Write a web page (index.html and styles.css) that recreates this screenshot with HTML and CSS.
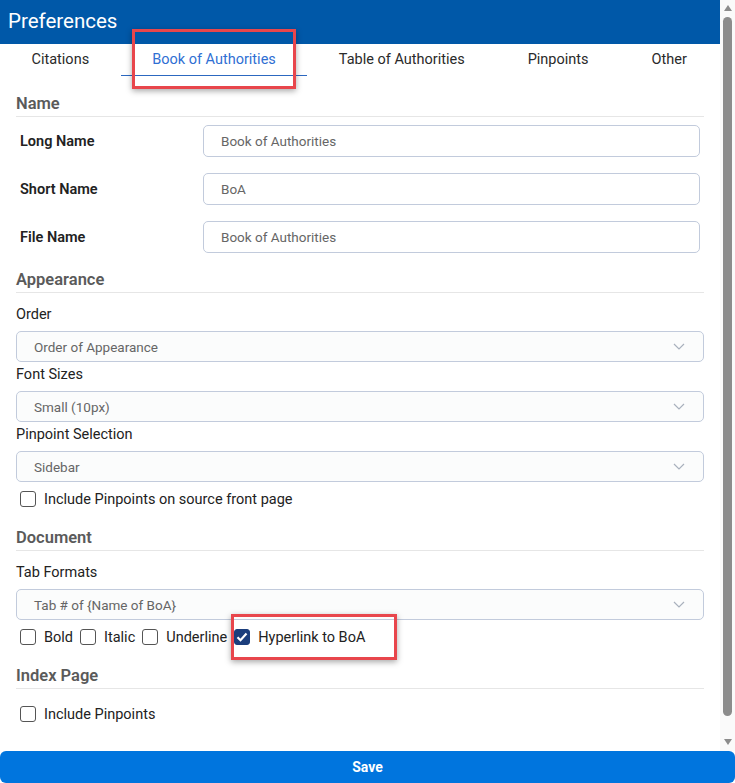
FILE: index.html
```html
<!DOCTYPE html>
<html lang="en">
<head>
  <meta charset="UTF-8">
  <meta name="viewport" content="width=device-width, initial-scale=1.0">
  <title>Preferences</title>
  <link rel="stylesheet" href="styles.css">
</head>
<body>
  <div class="dialog">
    <div class="scroll-wrap">
      <div class="scroller">
        <header class="titlebar">Preferences</header>

        <nav class="tabs">
          <div class="tab">Citations</div>
          <div class="tab active">Book of Authorities<span class="callout callout-tab"></span></div>
          <div class="tab">Table of Authorities</div>
          <div class="tab">Pinpoints</div>
          <div class="tab">Other</div>
        </nav>

        <div class="content">
          <section class="group">
            <h2 class="group-title">Name</h2>
            <div class="field-row">
              <label class="field-label">Long Name</label>
              <input class="text-input" type="text" value="Book of Authorities">
            </div>
            <div class="field-row">
              <label class="field-label">Short Name</label>
              <input class="text-input" type="text" value="BoA">
            </div>
            <div class="field-row">
              <label class="field-label">File Name</label>
              <input class="text-input" type="text" value="Book of Authorities">
            </div>
          </section>

          <section class="group">
            <h2 class="group-title">Appearance</h2>
            <div class="stack-label">Order</div>
            <div class="select">
              <span>Order of Appearance</span>
              <svg class="chevron" width="12" height="7" viewBox="0 0 12 7"><path d="M1 1l5 5 5-5" fill="none" stroke="#a9b1bd" stroke-width="1.2"/></svg>
            </div>
            <div class="stack-label">Font Sizes</div>
            <div class="select">
              <span>Small (10px)</span>
              <svg class="chevron" width="12" height="7" viewBox="0 0 12 7"><path d="M1 1l5 5 5-5" fill="none" stroke="#a9b1bd" stroke-width="1.2"/></svg>
            </div>
            <div class="stack-label">Pinpoint Selection</div>
            <div class="select">
              <span>Sidebar</span>
              <svg class="chevron" width="12" height="7" viewBox="0 0 12 7"><path d="M1 1l5 5 5-5" fill="none" stroke="#a9b1bd" stroke-width="1.2"/></svg>
            </div>
            <div class="check-row">
              <label class="check"><span class="box"></span>Include Pinpoints on source front page</label>
            </div>
          </section>

          <section class="group">
            <h2 class="group-title">Document</h2>
            <div class="stack-label">Tab Formats</div>
            <div class="select">
              <span>Tab # of {Name of BoA}</span>
              <svg class="chevron" width="12" height="7" viewBox="0 0 12 7"><path d="M1 1l5 5 5-5" fill="none" stroke="#a9b1bd" stroke-width="1.2"/></svg>
            </div>
            <div class="check-row">
              <label class="check"><span class="box"></span>Bold</label>
              <label class="check"><span class="box"></span>Italic</label>
              <label class="check"><span class="box"></span>Underline</label>
              <label class="check highlighted">
                <span class="box checked">
                  <svg width="12" height="10" viewBox="0 0 12 10"><path d="M1.5 5.2l3 3 6-6.6" fill="none" stroke="#fff" stroke-width="2.2"/></svg>
                </span>Hyperlink to BoA<span class="callout callout-check"></span>
              </label>
            </div>
          </section>

          <section class="group">
            <h2 class="group-title">Index Page</h2>
            <div class="check-row first">
              <label class="check"><span class="box"></span>Include Pinpoints</label>
            </div>
          </section>
        </div>
      </div>

      <div class="scrollbar">
        <svg class="arrow" width="8" height="6" viewBox="0 0 8 6"><path d="M4 0L8 6H0z" fill="#8c8c8c"/></svg>
        <div class="thumb"></div>
        <svg class="arrow" width="8" height="6" viewBox="0 0 8 6"><path d="M0 0H8L4 6z" fill="#8c8c8c"/></svg>
      </div>
    </div>

    <button class="save">Save</button>
  </div>
</body>
</html>
```

FILE: styles.css
```css
body {
  margin: 0;
  font-family: Roboto, 'Noto Sans', sans-serif;
  color: #222;
  background: #fff;
}

.dialog {
  width: 735px;
  height: 783px;
  display: flex;
  flex-direction: column;
}

.scroll-wrap {
  height: 751px;
  display: flex;
}

.scroller {
  flex: 1;
  overflow: hidden;
}

/* drawn scrollbar, thumb at the top */
.scrollbar {
  width: 15px;
  background: #fafafa;
  display: flex;
  flex-direction: column;
  align-items: center;
  padding: 5px 0 6px;
  box-sizing: border-box;
}

.thumb {
  flex: 1;
  width: 9px;
  margin: 6px 0 23px;
  border-radius: 5px;
  background: #8c8c8c;
}

.titlebar {
  height: 44px;
  background: #0058a8;
  color: #fff;
  font-size: 20.5px;
  line-height: 43px;
  padding-left: 8px;
}

.tabs {
  display: flex;
}

.tab {
  position: relative;
  padding: 8px 31.5px 7px;
  line-height: 16px;
  font-size: 14.5px;
  color: #2a2a2a;
  border-bottom: 1px solid transparent;
}

.tab.active {
  color: #2f6fd3;
  border-bottom-color: #2c68c0;
}

.callout {
  position: absolute;
  border: 3px solid #e8464c;
  box-shadow: 0 2px 6px rgba(0, 0, 0, 0.35);
  pointer-events: none;
}

.callout-tab {
  left: 11px;
  right: 11px;
  top: -15px;
  bottom: -14px;
}

.callout-check {
  left: -3px;
  top: -14px;
  width: 160px;
  height: 40px;
}

.content {
  padding: 0 16px 48px;
}

.group {
  margin-top: 18px;
}

.group + .group {
  margin-top: 17px;
}

.group + .group + .group {
  margin-top: 20px;
}

.group-title {
  margin: 0;
  font-size: 16.5px;
  font-weight: 600;
  line-height: 20px;
  color: #5a5a5a;
  padding-bottom: 2px;
  border-bottom: 1px solid #e6e6e6;
}

.field-row {
  display: grid;
  grid-template-columns: 183px 1fr;
  align-items: center;
  padding: 0 4px;
  margin-top: 16px;
}

.field-row:first-of-type {
  margin-top: 8px;
}

.field-label {
  font-size: 14.5px;
  font-weight: 600;
  color: #222;
}

.text-input {
  height: 32px;
  box-sizing: border-box;
  border: 1px solid #c2cbdc;
  border-radius: 5px;
  padding: 0 17px;
  font-family: inherit;
  font-size: 13.5px;
  color: #666;
  background: #fff;
}

.stack-label {
  font-size: 14.5px;
  line-height: 22px;
  margin: 2px 0 5px;
}

.group-title + .stack-label {
  margin-top: 11px;
}

.select {
  height: 31px;
  box-sizing: border-box;
  border: 1px solid #c2cbdc;
  border-radius: 5px;
  background: #fbfcfc;
  display: flex;
  align-items: center;
  justify-content: space-between;
  padding: 0 17px;
  font-size: 13.5px;
  color: #666;
}

.chevron {
  margin-right: 1px;
}

.check-row {
  display: flex;
  gap: 7px;
  margin-top: 8px;
  padding-left: 4px;
}

.check-row.first {
  margin-top: 16px;
}

.check {
  position: relative;
  display: flex;
  align-items: center;
  gap: 8px;
  height: 18px;
  font-size: 14.5px;
  color: #222;
}

.box {
  width: 16px;
  height: 16px;
  box-sizing: border-box;
  border: 1.5px solid #555;
  border-radius: 3px;
  display: flex;
  align-items: center;
  justify-content: center;
}

.box.checked {
  background: #1b3e7c;
  border-color: #1b3e7c;
}

.save {
  height: 32px;
  border: none;
  border-radius: 6px;
  background: #0075de;
  color: #fff;
  font-family: inherit;
  font-size: 14px;
  font-weight: 700;
  cursor: pointer;
}
```
